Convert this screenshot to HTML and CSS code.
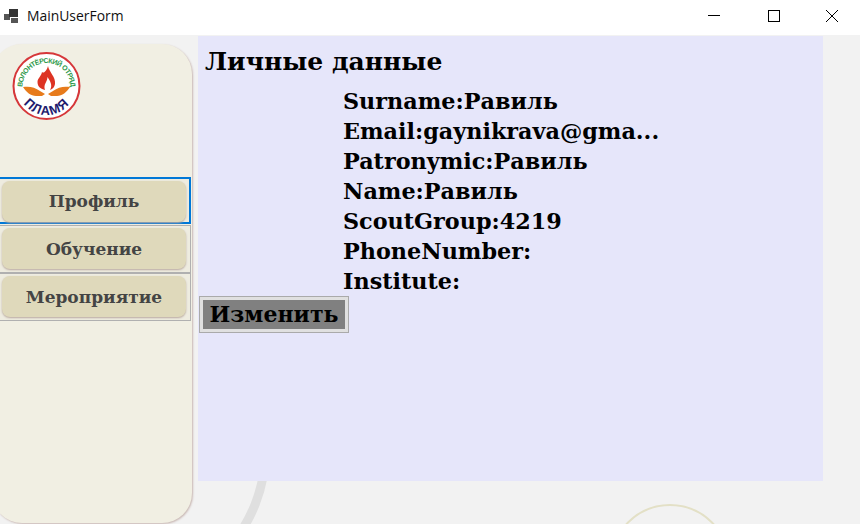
FILE: index.html
```html
<!DOCTYPE html>
<html>
	<head>
		<meta charset="utf-8"/>
		<title>MainUserForm</title>
		<link rel="stylesheet" href="styles.css">
	</head>
	<body>
		<header class="titlebar">
			<svg class="appicon" width="16" height="16" viewBox="0 0 16 16">
				<rect x="0" y="6" width="6" height="6" fill="#555"/>
				<rect x="5" y="1" width="9" height="8" fill="#333"/>
				<rect x="7" y="10" width="7" height="5" fill="#555"/>
			</svg>
			<span class="title">MainUserForm</span>
			<div class="controls">
				<svg width="46" height="30" viewBox="0 0 46 30"><path d="M15 14.500H27" stroke="#000" fill="none"/></svg>
				<svg width="46" height="30" viewBox="0 0 46 30"><rect x="17.500" y="9.500" width="11" height="11" stroke="#000" fill="none"/></svg>
				<svg width="46" height="30" viewBox="0 0 46 30"><path d="M17 9L29 21M29 9L17 21" stroke="#000" fill="none"/></svg>
			</div>
		</header>
		<div class="form">
			<div class="ring ring-grey"></div>
			<div class="ring ring-sand"></div>
			<aside class="sidebar">
				<svg class="logo" width="70" height="68" viewBox="0 0 70 68">
					<defs>
						<path id="topArc" d="M10.500 35A24 24 0 0 1 58.500 35"/>
						<path id="botArc" d="M8.600 47A29 29 0 0 0 60.400 47"/>
					</defs>
					<circle cx="34.500" cy="34" r="33" fill="#fff" stroke="#d6373a" stroke-width="2"/>
					<text class="logo-top"><textPath href="#topArc" textLength="75" lengthAdjust="spacing">ВОЛОНТЁРСКИЙ ОТРЯД</textPath></text>
					<path d="M36 14C37 20 44 25 43 32C42.500 35 41 37 38 38C41 33 38 29 35.500 25C35.500 30 31 32 33 38C29 37 25.500 35 25.500 30C25.500 26 29 25 30 20C32 22 35 18 36 14Z" fill="#dd3323"/>
					<path d="M11 35C17 34 23 35 28 39L33 42L30 44H24C19 44 14 40 11 35Z" fill="#e77b1c"/>
					<path d="M58 35C52 34 46 35 41 39L36 42L39 44H45C50 44 55 40 58 35Z" fill="#e77b1c"/>
					<text class="logo-bottom"><textPath href="#botArc" startOffset="50%" text-anchor="middle">ПЛАМЯ</textPath></text>
				</svg>
				<nav class="menu">
					<div class="menu-item active"><button type="button">Профиль</button></div>
					<div class="menu-item"><button type="button">Обучение</button></div>
					<div class="menu-item"><button type="button">Мероприятие</button></div>
				</nav>
			</aside>
			<main class="panel">
				<h1>Личные данные</h1>
				<ul class="fields">
					<li>Surname:Равиль</li>
					<li>Email:gaynikrava@gma...</li>
					<li>Patronymic:Равиль</li>
					<li>Name:Равиль</li>
					<li>ScoutGroup:4219</li>
					<li>PhoneNumber:</li>
					<li>Institute:</li>
				</ul>
				<button type="button" class="edit"><span>Изменить</span></button>
			</main>
		</div>
	</body>
</html>
```

FILE: styles.css
```css
html, body {
	margin: 0;
	padding: 0;
}
body {
	width: 860px;
	height: 524px;
	overflow: hidden;
	background: #f2f2f2;
	font-family: "DejaVu Serif", serif;
}
.titlebar {
	height: 35px;
	background: #fff;
	display: flex;
	align-items: center;
	padding-left: 4px;
	box-sizing: border-box;
	padding-bottom: 4px;
}
.appicon {
	margin-right: 7px;
}
.title {
	font-family: "Open Sans", sans-serif;
	font-size: 13.900px;
	color: #111;
}
.controls {
	margin-left: auto;
	display: flex;
	margin-right: 5px;
	gap: 12px;
}
.form {
	position: relative;
	height: 489px;
	overflow: hidden;
	display: flex;
}
.ring {
	position: absolute;
	border-radius: 50%;
	box-sizing: border-box;
}
.ring-grey {
	left: -34px;
	top: 263px;
	width: 304px;
	height: 304px;
	border: 9px solid #dfdfdf;
	clip-path: inset(50% 0 0 0);
}
.ring-sand {
	left: 610px;
	top: 469px;
	width: 120px;
	height: 120px;
	border: 2px solid #e3e0c6;
}
.sidebar {
	position: relative;
	margin: 9px 0 1px -8px;
	padding: 0 0 0 8px;
	width: 192px;
	height: 479px;
	flex: none;
	background: #f1efe3;
	border-radius: 30px;
	box-shadow: 1px 1px 2px #c9b8b4;
}
.logo {
	display: block;
	margin: 8px 0 0 12px;
}
.menu {
	margin-top: 57px;
	display: flex;
	flex-direction: column;
}
.menu-item {
	box-sizing: border-box;
	width: 191px;
	height: 48px;
	border: 1px solid #b0b0b0;
	border-left: none;
	padding: 2px 3px 2px 2px;
	background: #eeece0;
}
.menu-item.active {
	height: 47px;
	border: 2px solid #0078d7;
	border-left: none;
	margin-bottom: 1px;
}
.menu-item button {
	display: block;
	width: 184px;
	height: 41px;
	border: none;
	border-radius: 8px;
	background: #dfd9bb;
	box-shadow: 0 1px 2px #b9a9a0;
	font-family: "DejaVu Serif", serif;
	font-weight: bold;
	font-size: 17px;
	color: #444;
	padding: 0;
}
.menu-item.active button {
	padding-bottom: 2px;
}
.panel {
	margin: 1px 0 0 6px;
	width: 625px;
	height: 445px;
	background: #e6e6fa;
	flex: none;
	position: relative;
}
.panel h1 {
	margin: 0;
	padding: 9px 0 0 7px;
	font-size: 25px;
	line-height: 34px;
	color: #000;
}
.fields {
	list-style: none;
	margin: 0;
	padding: 7px 0 0 145px;
	font-size: 22.300px;
	line-height: 30px;
	font-weight: bold;
	color: #000;
}
.edit {
	display: block;
	margin: 0 0 0 1px;
	padding: 3px;
	width: 150px;
	height: 37px;
	box-sizing: border-box;
	border: 1px solid #aaa;
	background: #e0e0e0;
	font-family: "DejaVu Serif", serif;
	font-weight: bold;
	font-size: 22px;
	color: #000;
}
.edit span {
	display: block;
	height: 100%;
	line-height: 29px;
	background: #808080;
}
.logo-top {
	font-family: "Liberation Sans", sans-serif;
	font-size: 7px;
	font-weight: bold;
	fill: #2f9a4c;
}
.logo-bottom {
	font-family: "Liberation Sans", sans-serif;
	font-size: 13px;
	font-weight: bold;
	letter-spacing: 1px;
	fill: #1f1c6e;
}
```
